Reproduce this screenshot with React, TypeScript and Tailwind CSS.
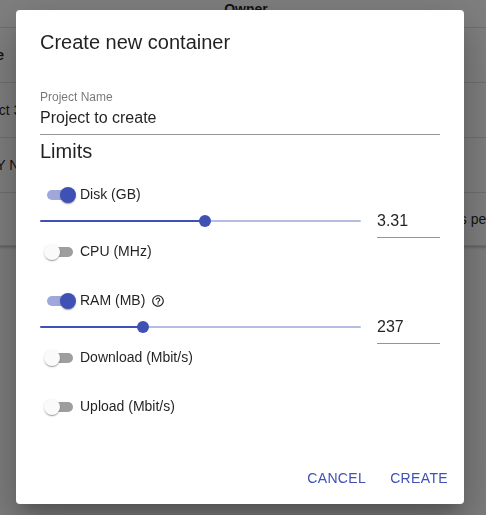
import { useState } from "react";
import type { CSSProperties } from "react";
import { MdHelpOutline } from "react-icons/md";

const THUMB = 12;

function LimitSwitch({
  id,
  label,
  checked,
  onChange,
  help,
}: {
  id: string;
  label: string;
  checked: boolean;
  onChange: (on: boolean) => void;
  help?: string;
}) {
  return (
    <div className="flex h-6 items-center">
      <input
        id={id}
        type="checkbox"
        role="switch"
        checked={checked}
        onChange={(e) => onChange(e.target.checked)}
        className="relative h-6 w-10 shrink-0 cursor-pointer appearance-none before:absolute before:top-[7px] before:left-[7px] before:h-2.5 before:w-[26px] before:rounded-full before:bg-[#9e9e9e] after:absolute after:top-1 after:left-1 after:size-4 after:rounded-full after:bg-[#fafafa] after:shadow-[0_2px_1px_-1px_rgba(0,0,0,0.2),0_1px_1px_0_rgba(0,0,0,0.14),0_1px_3px_0_rgba(0,0,0,0.12)] checked:before:bg-[#9fa8da] checked:after:left-5 checked:after:bg-[#3f51b5]"
      />
      <label htmlFor={id} className="cursor-pointer pb-0.5 text-sm leading-5">
        {label}
      </label>
      {help && (
        <span title={help} className="ml-1.5">
          <MdHelpOutline className="size-3.5" />
        </span>
      )}
    </div>
  );
}

function LimitSlider({
  name,
  initial,
  max,
  step,
}: {
  name: string;
  initial: number;
  max: number;
  step: number;
}) {
  const [value, setValue] = useState(initial);
  const ratio = value / max;
  const stop = `calc(${THUMB / 2}px + (100% - ${THUMB}px) * ${ratio})`;
  const track: CSSProperties = {
    backgroundImage: `linear-gradient(to right, #3f51b5 ${stop}, #b6bde3 ${stop})`,
  };
  return (
    <div className="flex gap-4 pb-0.5">
      <div className="flex h-7 min-w-0 flex-1 items-center">
        <input
          type="range"
          aria-label={`${name} slider`}
          min={0}
          max={max}
          step={step}
          value={value}
          onChange={(e) => setValue(Number(e.target.value))}
          style={track}
          className="h-0.5 w-full cursor-pointer appearance-none rounded-full [&::-webkit-slider-thumb]:size-3 [&::-webkit-slider-thumb]:appearance-none [&::-webkit-slider-thumb]:rounded-full [&::-webkit-slider-thumb]:bg-[#3f51b5]"
        />
      </div>
      <input
        type="text"
        inputMode="decimal"
        aria-label={name}
        value={value}
        onChange={(e) => setValue(Number(e.target.value) || 0)}
        className="h-[31px] w-[63px] border-b border-[#949494] pb-0.5 text-base outline-none"
      />
    </div>
  );
}

function ProjectsTable() {
  return (
    <div className="-mr-10 -ml-[34px] bg-white shadow-[0_1px_3px_rgba(0,0,0,0.3)]">
      <table className="w-full border-collapse text-left text-sm leading-5 whitespace-nowrap">
        <thead>
          <tr className="h-[27px] border-b border-[#e0e0e0]">
            <th colSpan={2} className="p-0 pb-2 text-center leading-[19px] font-bold">
              Owner
            </th>
          </tr>
          <tr className="h-[55px] border-b border-[#e0e0e0]">
            <th className="p-0 font-bold">Name</th>
            <th className="p-0" />
          </tr>
        </thead>
        <tbody>
          <tr className="h-[55px] border-b border-[#e0e0e0]">
            <td className="p-0">Project 3</td>
            <td className="p-0" />
          </tr>
          <tr className="h-[55px] border-b border-[#e0e0e0]">
            <td className="p-0">COPY N</td>
            <td className="p-0" />
          </tr>
          <tr className="h-[53px] border-b border-[#e0e0e0]">
            <td className="p-0" />
            <td className="p-0 pr-1 text-right">Rows per user</td>
          </tr>
        </tbody>
      </table>
    </div>
  );
}

export default function App() {
  const [limits, setLimits] = useState({
    disk: true,
    cpu: false,
    ram: true,
    download: false,
    upload: false,
  });
  const toggle = (key: keyof typeof limits) => (on: boolean) =>
    setLimits((current) => ({ ...current, [key]: on }));

  return (
    <div className="min-h-screen overflow-hidden bg-[#fafafa] font-['Liberation_Sans',Arial,sans-serif] text-black/87">
      <ProjectsTable />

      <div className="fixed inset-0 flex items-start justify-center overflow-auto bg-black/50 pt-2.5 pr-[22px] pl-4">
        <form
          role="dialog"
          aria-modal="true"
          aria-labelledby="dialog-title"
          onSubmit={(e) => e.preventDefault()}
          className="w-full max-w-[600px] rounded bg-white shadow-[0_11px_15px_-7px_rgba(0,0,0,0.2),0_24px_38px_3px_rgba(0,0,0,0.14),0_9px_46px_8px_rgba(0,0,0,0.12)]"
        >
          <h2 id="dialog-title" className="px-6 py-4 text-xl leading-8">
            Create new container
          </h2>

          <div className="px-6 pt-[15px] pb-[33px]">
            <div className="flex flex-col">
              <label htmlFor="project-name" className="text-xs leading-4 text-black/54">
                Project Name
              </label>
              <input
                id="project-name"
                type="text"
                defaultValue="Project to create"
                className="h-[30px] w-full border-b border-[#949494] pb-1 text-base outline-none"
              />
            </div>

            <h3 className="text-xl leading-8">Limits</h3>

            <div className="mt-4 flex flex-col gap-[25px]">
              <div>
                <LimitSwitch id="disk" label="Disk (GB)" checked={limits.disk} onChange={toggle("disk")} />
                {limits.disk && <LimitSlider name="Disk (GB)" initial={3.31} max={6.43} step={0.01} />}
                <LimitSwitch id="cpu" label="CPU (MHz)" checked={limits.cpu} onChange={toggle("cpu")} />
              </div>
              <div>
                <LimitSwitch
                  id="ram"
                  label="RAM (MB)"
                  checked={limits.ram}
                  onChange={toggle("ram")}
                  help="Memory available to the container"
                />
                {limits.ram && <LimitSlider name="RAM (MB)" initial={237} max={755} step={1} />}
                <LimitSwitch
                  id="download"
                  label="Download (Mbit/s)"
                  checked={limits.download}
                  onChange={toggle("download")}
                />
              </div>
              <LimitSwitch
                id="upload"
                label="Upload (Mbit/s)"
                checked={limits.upload}
                onChange={toggle("upload")}
              />
            </div>
          </div>

          <div className="flex justify-end gap-2 p-2">
            <button type="button" className="h-9 rounded px-2 text-sm tracking-wide text-[#3f51b5] uppercase">
              Cancel
            </button>
            <button type="submit" className="h-9 rounded px-2 text-sm tracking-wide text-[#3f51b5] uppercase">
              Create
            </button>
          </div>
        </form>
      </div>
    </div>
  );
}
